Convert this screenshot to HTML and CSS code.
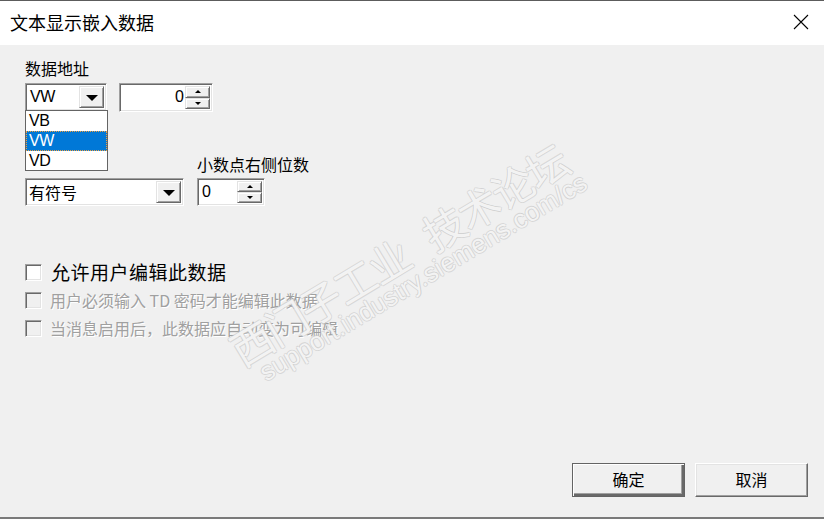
FILE: index.html
```html
<!DOCTYPE html>
<html lang="zh-CN">
<head>
<meta charset="utf-8">
<title>文本显示嵌入数据</title>
<link rel="stylesheet" href="styles.css">
</head>
<body>
<div class="window">
  <div class="titlebar">
    <span class="title">文本显示嵌入数据</span>
    <svg class="close" width="16" height="16" viewBox="0 0 16 16"><path d="M1 1 L15 15 M15 1 L1 15" stroke="#000" stroke-width="1.1" fill="none"/></svg>
  </div>
  <div class="body">
    <div class="label label-top">数据地址</div>
    <div class="row1">
      <div class="combo combo-sm">
        <div class="combo-text">VW</div>
        <div class="dd-btn"><span class="tri-down"></span></div>
        <ul class="listbox">
          <li class="item">VB</li>
          <li class="item selected">VW</li>
          <li class="item">VD</li>
        </ul>
      </div>
      <div class="spin spin-lg">
        <div class="spin-val right">0</div>
        <div class="spin-btns">
          <div class="sbtn"><span class="tri-s up"></span></div>
          <div class="sbtn"><span class="tri-s down"></span></div>
        </div>
      </div>
    </div>
    <div class="row2">
      <div class="combo combo-lg">
        <div class="combo-text cjk">有符号</div>
        <div class="dd-btn"><span class="tri-down"></span></div>
      </div>
      <div class="col">
        <div class="label">小数点右侧位数</div>
        <div class="spin spin-sm">
          <div class="spin-val">0</div>
          <div class="spin-btns">
            <div class="sbtn"><span class="tri-s up"></span></div>
            <div class="sbtn"><span class="tri-s down"></span></div>
          </div>
        </div>
      </div>
    </div>
    <div class="checks">
      <div class="check"><span class="cbox"></span><span class="ctext big">允许用户编辑此数据</span></div>
      <div class="check disabled"><span class="cbox"></span><span class="ctext">用户必须输入 TD 密码才能编辑此数据</span></div>
      <div class="check disabled"><span class="cbox"></span><span class="ctext">当消息启用后，此数据应自动变为可编辑</span></div>
    </div>
    <div class="buttons">
      <div class="btn default">确定</div>
      <div class="btn">取消</div>
    </div>
  </div>
  <div class="wm wm-cn"><span class="wm-gap">西门子工业</span>技术论坛</div>
  <div class="wm wm-en">support.industry.siemens.com/cs</div>
</div>
</body>
</html>
```
FILE: styles.css
```css
* { box-sizing: border-box; }
html, body { margin: 0; padding: 0; }
body {
  width: 824px;
  height: 519px;
  overflow: hidden;
  font-family: "Noto Sans CJK SC", "Liberation Sans", sans-serif;
  background: #f0f0f0;
  color: #000;
}
.window {
  position: relative;
  width: 824px;
  height: 519px;
  display: flex;
  flex-direction: column;
  overflow: hidden;
}
.titlebar {
  height: 45px;
  flex: none;
  background: #fff;
  border-top: 1px solid #5c5c5c;
  display: flex;
  align-items: center;
  justify-content: space-between;
  padding: 0 15px 2px 10px;
}
.title {
  font-size: 18px;
  line-height: 24px;
}
.close { display: block; }

.body {
  flex: 1;
  display: flex;
  flex-direction: column;
  padding-left: 25px;
  border-bottom: 2px solid #7a7a7a;
}
.label {
  font-size: 16px;
  line-height: 20px;
  height: 20px;
  white-space: nowrap;
}
.label-top { margin-top: 13px; }

.row1 {
  margin-top: 5px;
  display: flex;
  align-items: flex-start;
  gap: 12px;
}
.row2 {
  margin-top: 42px;
  display: flex;
  align-items: flex-end;
  gap: 13px;
}
.col {
  display: flex;
  flex-direction: column;
  gap: 4px;
}

/* sunken field border */
.combo, .spin {
  position: relative;
  display: flex;
  background: #fff;
  border: 1px solid;
  border-color: #a0a0a0 #ffffff #ffffff #a0a0a0;
  box-shadow: inset 1px 1px 0 #696969, inset -1px -1px 0 #e3e3e3;
  padding: 2px;
}
.combo-sm { width: 82px; height: 28px; }
.combo-lg { width: 159px; height: 28px; }
.spin-lg { width: 94px; height: 29px; }
.spin-sm { width: 68px; height: 28px; }

.combo-text {
  flex: 1;
  font-family: "Liberation Sans", "Noto Sans CJK SC", sans-serif;
  font-size: 16px;
  line-height: 22px;
  padding-left: 2px;
  letter-spacing: -0.5px;
}
.combo-text.cjk {
  font-family: "Noto Sans CJK SC", sans-serif;
  letter-spacing: 0;
  padding-left: 1px;
}
.dd-btn {
  width: 25px;
  flex: none;
  background: #f0f0f0;
  border: 1px solid;
  border-color: #e3e3e3 #696969 #696969 #e3e3e3;
  box-shadow: inset 1px 1px 0 #fff, inset -1px -1px 0 #a0a0a0;
  display: flex;
  align-items: center;
  justify-content: center;
}
.tri-down {
  width: 0; height: 0;
  border-left: 6px solid transparent;
  border-right: 6px solid transparent;
  border-top: 6px solid #000;
  margin-top: 2px;
}

.listbox {
  position: absolute;
  left: -1px;
  top: 100%;
  width: 83px;
  height: 61px;
  margin: 0;
  padding: 0;
  list-style: none;
  background: #fff;
  border: 1px solid #646464;
  z-index: 2;
}
.item {
  height: 20px;
  font-family: "Liberation Sans", sans-serif;
  font-size: 16px;
  line-height: 20px;
  padding-left: 3px;
  letter-spacing: -0.5px;
}
.item.selected {
  background: #0078d7;
  color: #fff;
  outline: 1px dotted #f0a040;
  outline-offset: -1px;
}

.spin-val {
  flex: 1;
  font-family: "Liberation Sans", sans-serif;
  font-size: 16px;
  line-height: 22px;
  padding-left: 2px;
}
.spin-val.right { text-align: right; padding-right: 1px; }
.spin-btns {
  width: 25px;
  flex: none;
  display: flex;
  flex-direction: column;
}
.sbtn {
  flex: 1;
  background: #f0f0f0;
  border: 1px solid;
  border-color: #e3e3e3 #696969 #696969 #e3e3e3;
  box-shadow: inset 1px 1px 0 #fff, inset -1px -1px 0 #a0a0a0;
  display: flex;
  align-items: center;
  justify-content: center;
}
.tri-s {
  width: 0; height: 0;
  border-left: 3px solid transparent;
  border-right: 3px solid transparent;
}
.tri-s.up { border-bottom: 3px solid #000; }
.tri-s.down { border-top: 3px solid #000; }

.checks {
  margin-top: 52px;
  display: flex;
  flex-direction: column;
}
.check {
  height: 28px;
  display: flex;
  align-items: center;
}
.cbox {
  width: 17px;
  height: 17px;
  flex: none;
  background: #fff;
  border: 1px solid;
  border-color: #a0a0a0 #ffffff #ffffff #a0a0a0;
  box-shadow: inset 1px 1px 0 #696969, inset -1px -1px 0 #e3e3e3;
}
.ctext {
  margin-left: 8px;
  font-size: 16px;
  line-height: 22px;
  white-space: nowrap;
}
.ctext.big {
  font-size: 19px;
  letter-spacing: 0.5px;
  margin-left: 9px;
}
.check.disabled .cbox { background: #f0f0f0; }
.check.disabled .ctext {
  color: #a0a0a0;
  text-shadow: 1px 1px 0 #fff;
}

.buttons {
  margin-top: auto;
  display: flex;
  justify-content: flex-end;
  gap: 10px;
  padding: 0 16px 20px 0;
}
.btn {
  width: 113px;
  height: 34px;
  background: #f0f0f0;
  border: 1px solid;
  border-color: #fff #696969 #696969 #fff;
  box-shadow: inset -1px -1px 0 #a0a0a0, inset 1px 1px 0 #e3e3e3;
  font-size: 16px;
  line-height: 31px;
  text-align: center;
}
.btn.default {
  border: 1px solid #646464;
  box-shadow: inset 1px 1px 0 #fff, inset -2px -2px 0 #696969, inset -3px -3px 0 #a0a0a0;
}

/* watermark overlay */
.wm {
  position: absolute;
  width: 460px;
  text-align: center;
  white-space: nowrap;
  transform: rotate(-31deg);
  transform-origin: center center;
  pointer-events: none;
  z-index: 3;
  color: rgba(255, 255, 255, 0.8);
  text-shadow: 1px 0 0 rgba(200, 200, 200, 0.6), -1px 0 0 rgba(200, 200, 200, 0.6), 0 1px 0 rgba(200, 200, 200, 0.6), 0 -1px 0 rgba(200, 200, 200, 0.6);
}
.wm-cn {
  left: 168px;
  top: 232px;
  height: 44px;
  font-size: 42px;
  line-height: 44px;
  letter-spacing: -2px;
}
.wm-gap { margin-right: 24px; }
.wm-en {
  left: 193px;
  top: 262px;
  height: 30px;
  font-family: "Liberation Sans", sans-serif;
  font-size: 26px;
  line-height: 30px;
}
```
